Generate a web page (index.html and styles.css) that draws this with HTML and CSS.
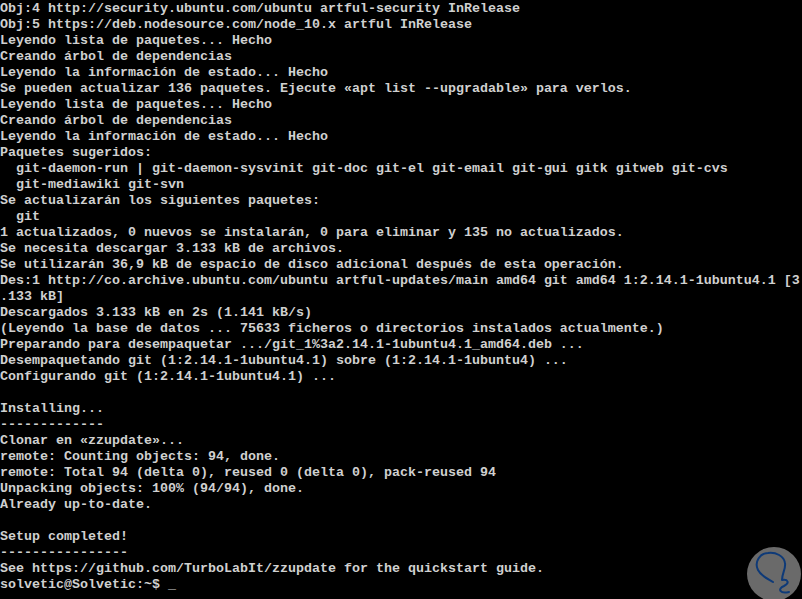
FILE: index.html
```html
<!DOCTYPE html>
<html lang="es">
<head>
<meta charset="utf-8">
<title>Terminal</title>
<link rel="stylesheet" href="styles.css">
</head>
<body>
<pre class="console">Obj:4 http://security.ubuntu.com/ubuntu artful-security InRelease
Obj:5 https://deb.nodesource.com/node_10.x artful InRelease
Leyendo lista de paquetes... Hecho
Creando árbol de dependencias
Leyendo la información de estado... Hecho
Se pueden actualizar 136 paquetes. Ejecute «apt list --upgradable» para verlos.
Leyendo lista de paquetes... Hecho
Creando árbol de dependencias
Leyendo la información de estado... Hecho
Paquetes sugeridos:
  git-daemon-run | git-daemon-sysvinit git-doc git-el git-email git-gui gitk gitweb git-cvs
  git-mediawiki git-svn
Se actualizarán los siguientes paquetes:
  git
1 actualizados, 0 nuevos se instalarán, 0 para eliminar y 135 no actualizados.
Se necesita descargar 3.133 kB de archivos.
Se utilizarán 36,9 kB de espacio de disco adicional después de esta operación.
Des:1 http://co.archive.ubuntu.com/ubuntu artful-updates/main amd64 git amd64 1:2.14.1-1ubuntu4.1 [3
.133 kB]
Descargados 3.133 kB en 2s (1.141 kB/s)
(Leyendo la base de datos ... 75633 ficheros o directorios instalados actualmente.)
Preparando para desempaquetar .../git_1%3a2.14.1-1ubuntu4.1_amd64.deb ...
Desempaquetando git (1:2.14.1-1ubuntu4.1) sobre (1:2.14.1-1ubuntu4) ...
Configurando git (1:2.14.1-1ubuntu4.1) ...

Installing...
-------------
Clonar en «zzupdate»...
remote: Counting objects: 94, done.
remote: Total 94 (delta 0), reused 0 (delta 0), pack-reused 94
Unpacking objects: 100% (94/94), done.
Already up-to-date.

Setup completed!
----------------
See https://github.com/TurboLabIt/zzupdate for the quickstart guide.
solvetic@Solvetic:~$ _</pre>
<svg class="watermark" width="56" height="53" viewBox="0 0 56 53" aria-hidden="true">
  <circle cx="28" cy="28" r="27" fill="#6a6a6a"/>
  <path d="M27 36 C22 33 15 30 12 24 C8 16 14 7 22 7 C30 6 38 10 39 17 C40 23 36 27 36 34 C42 33 44 37 38 40 C31 43 34 48 43 46" fill="none" stroke="#0e3a78" stroke-width="2" stroke-linecap="round" stroke-linejoin="round"/>
</svg>
</body>
</html>
```
FILE: styles.css
```css
html, body {
  margin: 0;
  padding: 0;
  background: #000;
  height: 100%;
  overflow: hidden;
}
body {
  position: relative;
}
.console {
  margin: 0;
  padding: 1px 0 0 0;
  font-family: "Liberation Mono", "DejaVu Sans Mono", monospace;
  font-size: 13.333px;
  line-height: 16px;
  font-weight: bold;
  color: #d0d0d0;
  white-space: pre;
}
.watermark {
  position: absolute;
  left: 746px;
  top: 546px;
  display: block;
}
```
